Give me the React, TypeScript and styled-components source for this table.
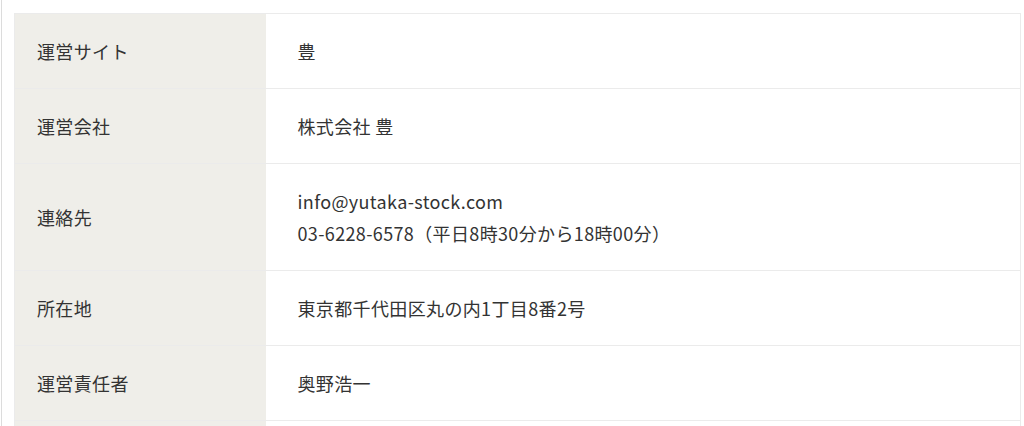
import React from "react";
import styled, { createGlobalStyle } from "styled-components";

const Global = createGlobalStyle`
  html, body { margin: 0; padding: 0; background: #fff; }
  body {
    font-family: "Noto Sans CJK JP", "Noto Sans", sans-serif;
    color: #333;
  }
`;

const Page = styled.div`
  margin-left: 1px;
  border-left: 1px solid #dcdcdc;
  padding: 13px 3px 0 12px;
  height: 426px;
  box-sizing: border-box;
  overflow: hidden;
`;

const Table = styled.table`
  width: 100%;
  border-collapse: collapse;
  border: 1px solid #ebebeb;
  font-size: 18px;
  line-height: 32px;
  letter-spacing: 0.02em;
`;

const Row = styled.tr`
  border-bottom: 1px solid #ebebeb;
`;

const Head = styled.th`
  width: 251px;
  box-sizing: border-box;
  background: #efeee9;
  text-align: left;
  font-weight: 400;
  padding: 21px 22px;
  vertical-align: middle;
`;

const Cell = styled.td`
  padding: 21px 32px;
  vertical-align: middle;
  background: #fff;
`;

const Line = styled.div``;

const rows: { label: string; value: string[] }[] = [
  { label: "運営サイト", value: ["豊"] },
  { label: "運営会社", value: ["株式会社 豊"] },
  {
    label: "連絡先",
    value: ["info@yutaka-stock.com", "03-6228-6578（平日8時30分から18時00分）"],
  },
  { label: "所在地", value: ["東京都千代田区丸の内1丁目8番2号"] },
  { label: "運営責任者", value: ["奥野浩一"] },
  { label: "", value: [""] },
];

export default function App() {
  return (
    <>
      <Global />
      <Page>
        <Table>
          <tbody>
            {rows.map((r, i) => (
              <Row key={i}>
                <Head>{r.label || "\u00a0"}</Head>
                <Cell>
                  {r.value.map((v, j) => (
                    <Line key={j}>{v || "\u00a0"}</Line>
                  ))}
                </Cell>
              </Row>
            ))}
          </tbody>
        </Table>
      </Page>
    </>
  );
}
